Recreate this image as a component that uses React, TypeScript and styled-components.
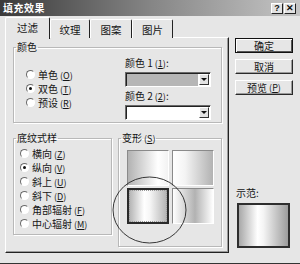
import React from "react";
import styled, { createGlobalStyle } from "styled-components";

const GlobalStyle = createGlobalStyle`
  html, body {
    margin: 0;
    padding: 0;
    background: #e6e6e6;
  }
  body {
    font-family: "Noto Sans CJK SC", "Noto Sans", sans-serif;
    font-size: 10px;
    color: #151515;
  }
`;

const GRAY = "#b2b2b2";

const Window = styled.div`
  position: relative;
  width: 300px;
  height: 264px;
  box-sizing: border-box;
  background: #e6e6e6;
  overflow: hidden;
  border-bottom: 1px solid #333;
`;

const TitleBar = styled.div`
  height: 16px;
  display: flex;
  align-items: center;
  justify-content: space-between;
  padding: 0 4px 0 3px;
  background: linear-gradient(to right, #3a3a3a, #858585 50%, #c6c6c6);
`;

const TitleText = styled.span`
  color: #fff;
  font-weight: bold;
  font-size: 10px;
  letter-spacing: 0.5px;
  line-height: 16px;
`;

const TitleButtons = styled.div`
  display: flex;
  gap: 1px;
`;

const TitleButton = styled.div`
  width: 12px;
  height: 11px;
  box-sizing: border-box;
  background: #e2e2e2;
  border: 1px solid;
  border-color: #fff #222 #222 #fff;
  display: flex;
  align-items: center;
  justify-content: center;
  font: bold 9px "Liberation Sans", sans-serif;
  line-height: 1;
  color: #111;
`;

const Body = styled.div`
  display: flex;
  padding: 1px 0 0 5px;
  gap: 6px;
`;

const LeftCol = styled.div`
  width: 224px;
  display: flex;
  flex-direction: column;
`;

const TabRow = styled.div`
  display: flex;
  align-items: flex-end;
  height: 21px;
  position: relative;
  z-index: 1;
`;

const Tab = styled.div<{ $active?: boolean; $w: number }>`
  width: ${(p) => p.$w}px;
  height: ${(p) => (p.$active ? 22 : 19)}px;
  box-sizing: border-box;
  display: flex;
  align-items: center;
  justify-content: center;
  padding-bottom: ${(p) => (p.$active ? 2 : 0)}px;
  background: #e6e6e6;
  border-top: 1px solid #fff;
  border-left: 1px solid #fff;
  border-right: 1px solid #222;
  border-radius: 2px 2px 0 0;
  margin-bottom: ${(p) => (p.$active ? -1 : 0)}px;
  font-size: 10.5px;
`;

const Panel = styled.div`
  height: 216px;
  margin-top: -1px;
  box-sizing: border-box;
  border: 1px solid;
  border-color: #fff #222 #222 #fff;
  box-shadow: inset -1px -1px 0 #9a9a9a;
  padding: 4px 6px 0 7px;
`;

const Group = styled.fieldset<{ $w?: number; $h: number }>`
  margin: 0;
  padding: 0;
  min-width: 0;
  width: ${(p) => (p.$w ? `${p.$w}px` : "auto")};
  height: ${(p) => p.$h}px;
  box-sizing: border-box;
  border: 1px solid #b8b8b8;
  box-shadow: 1px 1px 0 #fff, inset 1px 1px 0 #fff;
`;

const Legend = styled.legend`
  padding: 0 1px;
  margin-left: 2px;
  line-height: 10px;
  font-size: 10px;
`;

const ColorInner = styled.div`
  display: flex;
  justify-content: space-between;
  padding: 0 10px 0 6px;
`;

const RadioList = styled.div<{ $top: number }>`
  display: flex;
  flex-direction: column;
  padding: ${(p) => p.$top}px 0 0 6px;
`;

const RadioRow = styled.div`
  display: flex;
  align-items: center;
  gap: 3px;
  height: 14px;
  white-space: nowrap;
`;

const RadioDot = styled.span<{ $checked?: boolean }>`
  position: relative;
  width: 9px;
  height: 9px;
  box-sizing: border-box;
  border-radius: 50%;
  background: #fff;
  border: 1px solid;
  border-color: #6a6a6a #fff #fff #6a6a6a;
  &::after {
    content: "";
    display: ${(p) => (p.$checked ? "block" : "none")};
    position: absolute;
    left: 2px;
    top: 2px;
    width: 3px;
    height: 3px;
    border-radius: 50%;
    background: #111;
  }
`;

const Key = styled.span`
  font-size: 9px;
  margin-left: 2px;
  u {
    text-decoration: underline;
  }
`;

const ColorPickers = styled.div`
  width: 86px;
  display: flex;
  flex-direction: column;
  padding-top: 5px;
`;

const PickerLabel = styled.div`
  line-height: 12px;
  height: 12px;
  white-space: nowrap;
  & + div {
    margin-top: 3px;
  }
`;

const Select = styled.div`
  height: 15px;
  box-sizing: border-box;
  border: 1px solid;
  border-color: #6a6a6a #fff #fff #6a6a6a;
  box-shadow: inset 1px 1px 0 #222;
  background: #fff;
  padding: 2px 1px 1px 2px;
  display: flex;
  gap: 1px;
  & + div {
    margin-top: 3px;
  }
`;

const SelectValue = styled.div<{ $fill: string }>`
  flex: 1;
  background: ${(p) => p.$fill};
  margin: -1px 0 -1px -1px;
`;

const SelectArrow = styled.div`
  width: 10px;
  box-sizing: border-box;
  background: #e2e2e2;
  border: 1px solid;
  border-color: #fff #333 #333 #fff;
  display: flex;
  align-items: center;
  justify-content: center;
  margin: -1px 0 0;
  &::after {
    content: "";
    border-left: 3px solid transparent;
    border-right: 3px solid transparent;
    border-top: 3px solid #111;
  }
`;

const LowerRow = styled.div`
  display: flex;
  justify-content: space-between;
  margin-top: 10px;
`;

const SwatchGrid = styled.div`
  display: grid;
  grid-template-columns: 42px 42px;
  grid-auto-rows: 36px;
  gap: 2px 3px;
  padding: 6px 0 0 8px;
`;

const Swatch = styled.div<{ $bg: string; $selected?: boolean }>`
  box-sizing: border-box;
  background: ${(p) => p.$bg};
  border: ${(p) => (p.$selected ? "2px solid" : "1px solid")};
  border-color: ${(p) => (p.$selected ? "#2a2a2a" : "#8a8a8a #fff #fff #8a8a8a")};
  outline: ${(p) => (p.$selected ? "1px dotted #9a9a9a" : "none")};
  outline-offset: -3px;
`;

const RightCol = styled.div`
  width: 58px;
  display: flex;
  flex-direction: column;
  padding-top: 21px;
`;

const Button = styled.div<{ $default?: boolean }>`
  height: 15px;
  box-sizing: border-box;
  display: flex;
  align-items: center;
  justify-content: center;
  background: #e6e6e6;
  border: 1px solid;
  border-color: ${(p) => (p.$default ? "#111" : "#fff #2a2a2a #2a2a2a #fff")};
  box-shadow: ${(p) =>
    p.$default
      ? "inset 1px 1px 0 #fff, inset -1px -1px 0 #555"
      : "inset -1px -1px 0 #9a9a9a"};
  line-height: 1;
  & + & {
    margin-top: 6px;
  }
`;

const PreviewLabel = styled.div`
  margin: 92px 0 0 1px;
  line-height: 12px;
`;

const PreviewBox = styled.div`
  width: 53px;
  height: 45px;
  margin: 4px 0 0 2px;
  box-sizing: border-box;
  border: 2px solid #2e2e2e;
  background: linear-gradient(to right, #a8a8a8, #fff 38%, #f4f4f4 50%, #9c9c9c);
`;

const Callout = styled.svg`
  position: absolute;
  left: 112px;
  top: 176px;
  pointer-events: none;
`;

const swatches = [
  `linear-gradient(to right, ${GRAY}, #fff 75%, #f2f2f2)`,
  `linear-gradient(to right, #fff, #f4f4f4 30%, ${GRAY})`,
  `linear-gradient(to right, ${GRAY}, #fff 40%, #f6f6f6 55%, ${GRAY})`,
  `linear-gradient(to right, #fff, ${GRAY} 55%, #fff)`,
];

const Radio = ({ label, k, checked }: { label: string; k: string; checked?: boolean }) => (
  <RadioRow>
    <RadioDot $checked={checked} />
    <span>
      {label}
      <Key>
        (<u>{k}</u>)
      </Key>
    </span>
  </RadioRow>
);

const App = () => {
  return (
    <Window>
      <GlobalStyle />
      <TitleBar>
        <TitleText>填充效果</TitleText>
        <TitleButtons>
          <TitleButton>?</TitleButton>
          <TitleButton>✕</TitleButton>
        </TitleButtons>
      </TitleBar>
      <Body>
        <LeftCol>
          <TabRow>
            <Tab $active $w={45}>过滤</Tab>
            <Tab $w={40}>纹理</Tab>
            <Tab $w={42}>图案</Tab>
            <Tab $w={41}>图片</Tab>
          </TabRow>
          <Panel>
            <Group $h={81}>
              <Legend>颜色</Legend>
              <ColorInner>
                <RadioList $top={15}>
                  <Radio label="单色" k="O" />
                  <Radio label="双色" k="T" checked />
                  <Radio label="预设" k="R" />
                </RadioList>
                <ColorPickers>
                  <PickerLabel>
                    颜色 1<Key>(<u>1</u>)</Key>:
                  </PickerLabel>
                  <Select>
                    <SelectValue $fill="#b6b6b6" />
                    <SelectArrow />
                  </Select>
                  <PickerLabel>
                    颜色 2<Key>(<u>2</u>)</Key>:
                  </PickerLabel>
                  <Select>
                    <SelectValue $fill="#fff" />
                    <SelectArrow />
                  </Select>
                </ColorPickers>
              </ColorInner>
            </Group>
            <LowerRow>
              <Group $w={99} $h={102}>
                <Legend>底纹式样</Legend>
                <RadioList $top={3}>
                  <Radio label="横向" k="Z" />
                  <Radio label="纵向" k="V" checked />
                  <Radio label="斜上" k="U" />
                  <Radio label="斜下" k="D" />
                  <Radio label="角部辐射" k="F" />
                  <Radio label="中心辐射" k="M" />
                </RadioList>
              </Group>
              <Group $w={104} $h={114}>
                <Legend>
                  变形<Key>(<u>S</u>)</Key>
                </Legend>
                <SwatchGrid>
                  {swatches.map((bg, i) => (
                    <Swatch key={i} $bg={bg} $selected={i === 2} />
                  ))}
                </SwatchGrid>
              </Group>
            </LowerRow>
          </Panel>
        </LeftCol>
        <RightCol>
          <Button $default>确定</Button>
          <Button>取消</Button>
          <Button>
            预览<Key>(<u>P</u>)</Key>
          </Button>
          <PreviewLabel>示范:</PreviewLabel>
          <PreviewBox />
        </RightCol>
      </Body>
      <Callout width="76" height="70" viewBox="0 0 76 70">
        <ellipse cx="37.5" cy="34" rx="36.5" ry="33" fill="none" stroke="#222" strokeWidth="0.9" />
      </Callout>
    </Window>
  );
};

export default App;
